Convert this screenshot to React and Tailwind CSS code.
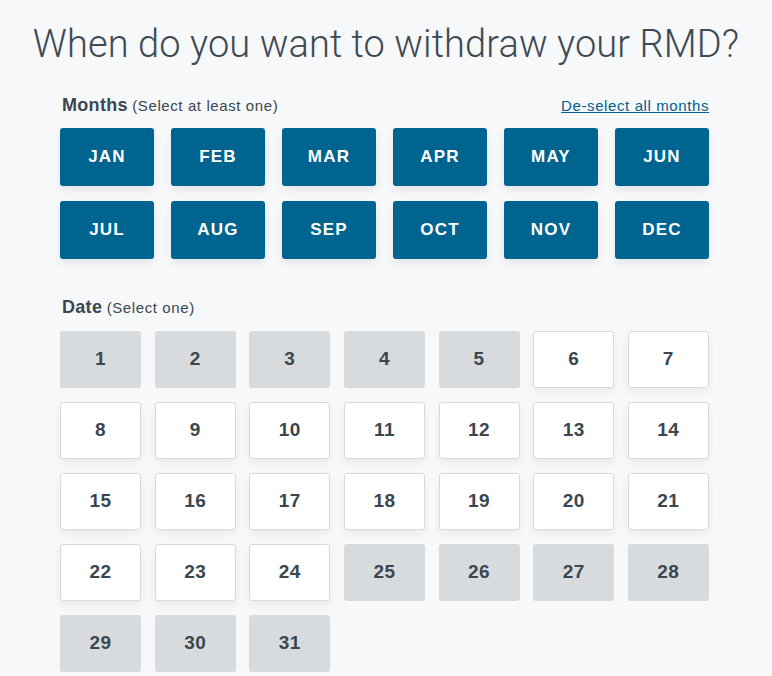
const months = ['JAN', 'FEB', 'MAR', 'APR', 'MAY', 'JUN', 'JUL', 'AUG', 'SEP', 'OCT', 'NOV', 'DEC'];

// days 1-5 and 25-31 are not available
const days = Array.from({ length: 31 }, (_, i) => ({
    day: i + 1,
    disabled: i + 1 <= 5 || i + 1 >= 25,
}));

function MonthButton({ label }) {
    return (
        <button className="h-[58px] rounded-[3px] bg-[#006491] text-white text-[17px] font-bold tracking-[1.2px] shadow-[0_4px_8px_rgba(0,0,0,0.08)]">
            {label}
        </button>
    );
}

function DayButton({ day, disabled }) {
    if (disabled) {
        return (
            <button className="h-[57px] rounded-[3px] bg-[#d8dbde] text-[#3b4750] text-[19px] font-bold tracking-[0.5px]">
                {day}
            </button>
        );
    }
    return (
        <button className="h-[57px] rounded-[3px] bg-white border border-[#d6dadd] text-[#3b4750] text-[19px] font-bold tracking-[0.5px] shadow-[0_4px_8px_rgba(0,0,0,0.06)]">
            {day}
        </button>
    );
}

export default function App() {
    return (
        <div className="min-h-screen bg-[#f7f8fa] font-['Liberation_Sans',Arial,sans-serif] text-[#3b4750]">
            <h1 className="pt-[21px] text-center font-['Roboto',sans-serif] text-[38px] font-light leading-[46px] tracking-[0.1px] text-[#3e4a53]">
                When do you want to withdraw your RMD?
            </h1>

            <div className="ml-[60px] w-[649px]">
                <div className="mt-[25px] flex items-baseline justify-between pl-[2px]">
                    <p>
                        <span className="text-[18px] font-bold tracking-[0.3px]">Months</span>{' '}
                        <span className="text-[15px] tracking-[0.6px]">(Select at least one)</span>
                    </p>
                    <a href="#" className="text-[15px] tracking-[0.6px] text-[#00618f] underline">
                        De-select all months
                    </a>
                </div>

                <div className="mt-[9px] grid grid-cols-6 gap-x-[17px] gap-y-[15px]">
                    {months.map((m) => (
                        <MonthButton key={m} label={m} />
                    ))}
                </div>

                <p className="mt-[35px] pl-[2px]">
                    <span className="text-[18px] font-bold tracking-[0.3px]">Date</span>{' '}
                    <span className="text-[15px] tracking-[0.6px]">(Select one)</span>
                </p>

                <div className="mt-[10px] grid grid-cols-7 gap-x-[13.4px] gap-y-[14px] pb-[6px]">
                    {days.map((d) => (
                        <DayButton key={d.day} day={d.day} disabled={d.disabled} />
                    ))}
                </div>
            </div>
        </div>
    );
}
